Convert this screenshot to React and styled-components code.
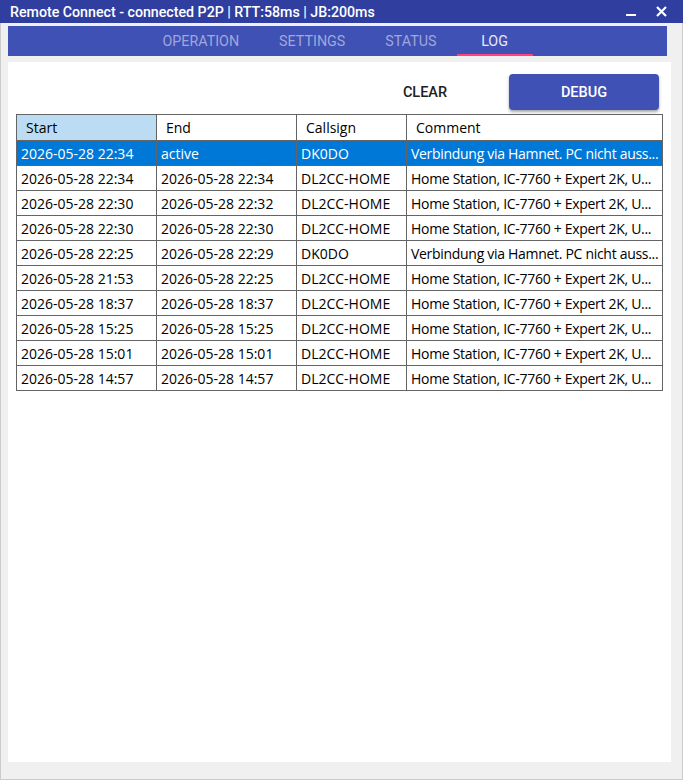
import styled, { createGlobalStyle } from "styled-components"

const GlobalStyle = createGlobalStyle`
  html, body {
    margin: 0;
    padding: 0;
    background: #f0f0f0;
  }
`

const TABS = ["Operation", "Settings", "Status", "Log"]

const COLUMNS = [
  { key: "start", title: "Start", width: 140 },
  { key: "end", title: "End", width: 140 },
  { key: "call", title: "Callsign", width: 110 },
  { key: "comment", title: "Comment", width: 256 },
]

const HOME = "Home Station, IC-7760 + Expert 2K, U..."
const HAMNET = "Verbindung via Hamnet. PC nicht auss..."

const ROWS = [
  { start: "2026-05-28 22:34", end: "active", call: "DK0DO", comment: HAMNET },
  { start: "2026-05-28 22:34", end: "2026-05-28 22:34", call: "DL2CC-HOME", comment: HOME },
  { start: "2026-05-28 22:30", end: "2026-05-28 22:32", call: "DL2CC-HOME", comment: HOME },
  { start: "2026-05-28 22:30", end: "2026-05-28 22:30", call: "DL2CC-HOME", comment: HOME },
  { start: "2026-05-28 22:25", end: "2026-05-28 22:29", call: "DK0DO", comment: HAMNET },
  { start: "2026-05-28 21:53", end: "2026-05-28 22:25", call: "DL2CC-HOME", comment: HOME },
  { start: "2026-05-28 18:37", end: "2026-05-28 18:37", call: "DL2CC-HOME", comment: HOME },
  { start: "2026-05-28 15:25", end: "2026-05-28 15:25", call: "DL2CC-HOME", comment: HOME },
  { start: "2026-05-28 15:01", end: "2026-05-28 15:01", call: "DL2CC-HOME", comment: HOME },
  { start: "2026-05-28 14:57", end: "2026-05-28 14:57", call: "DL2CC-HOME", comment: HOME },
]

const App = () => {
  return (
    <>
      <GlobalStyle />
      <Window>
        <TitleBar>
          <span className="title">Remote Connect - connected P2P | RTT:58ms | JB:200ms</span>
          <WinButton aria-label="minimize">
            <svg width="10" height="10" viewBox="0 0 10 10">
              <rect x="0" y="7" width="10" height="2" fill="#fff" />
            </svg>
          </WinButton>
          <WinButton aria-label="close">
            <svg width="11" height="11" viewBox="0 0 11 11">
              <path d="M1 1 L10 10 M10 1 L1 10" stroke="#fff" strokeWidth="2.2" />
            </svg>
          </WinButton>
        </TitleBar>

        <Body>
          <TabBar>
            {TABS.map((t) => (
              <Tab key={t} $active={t === "Log"}>{t}</Tab>
            ))}
          </TabBar>

          <Panel>
            <Toolbar>
              <TextButton>Clear</TextButton>
              <RaisedButton>Debug</RaisedButton>
            </Toolbar>

            <Grid>
              <colgroup>
                {COLUMNS.map((c) => (
                  <col key={c.key} width={c.width} />
                ))}
              </colgroup>
              <thead>
                <tr>
                  {COLUMNS.map((c) => (
                    <HeadCell key={c.key} $sorted={c.key === "start"}>
                      {c.title}
                    </HeadCell>
                  ))}
                </tr>
              </thead>
              <tbody>
                {ROWS.map((r, i) => (
                  <Row key={i} $selected={i === 0}>
                    {COLUMNS.map((c) => (
                      <Cell key={c.key} $tight={c.key === "comment"}>{r[c.key]}</Cell>
                    ))}
                  </Row>
                ))}
              </tbody>
            </Grid>
          </Panel>
        </Body>
      </Window>
    </>
  )
}

const Window = styled.div`
width: 683px;
height: 780px;
display: flex;
flex-direction: column;
background: #f0f0f0;
box-sizing: border-box;
`

const TitleBar = styled.div`
height: 23px;
flex: none;
display: flex;
align-items: center;
background: #303f9f;
color: #fff;
padding: 0 6px 0 10px;
font-family: Roboto, "Liberation Sans", sans-serif;
font-size: 14.2px;
font-weight: 500;
.title {
    flex: 1;
    white-space: nowrap;
}
`

const WinButton = styled.div`
width: 31px;
height: 23px;
display: flex;
align-items: center;
justify-content: center;
`

const Body = styled.div`
flex: 1;
display: flex;
flex-direction: column;
padding: 3px 11px 17px 7px;
border: 1px solid #cbcbcb;
border-top: none;
min-height: 0;
`

const TabBar = styled.div`
height: 30px;
flex: none;
margin-right: 4px;
background: #3f51b5;
display: flex;
justify-content: center;
`

const Tab = styled.div`
min-width: 76px;
padding: 0 20px;
box-sizing: border-box;
display: flex;
align-items: center;
justify-content: center;
padding-top: 1px;
text-transform: uppercase;
font-family: Roboto, "Liberation Sans", sans-serif;
font-size: 14.3px;
color: ${(p) => (p.$active ? "#e8eaf6" : "#9fa8da")};
border-bottom: 2px solid ${(p) => (p.$active ? "#ff4081" : "transparent")};
`

const Panel = styled.div`
flex: 1;
margin-top: 6px;
background: #fff;
padding: 12px 9px 0 8px;
`

const Toolbar = styled.div`
display: flex;
justify-content: flex-end;
gap: 9px;
padding-right: 3px;
margin-bottom: 4px;
`

const ButtonBase = styled.div`
width: 150px;
height: 36px;
display: flex;
align-items: center;
justify-content: center;
text-transform: uppercase;
font-family: Roboto, "Liberation Sans", sans-serif;
font-size: 14.5px;
font-weight: 500;
border-radius: 4px;
`

const TextButton = styled(ButtonBase)`
color: #212121;
`

const RaisedButton = styled(ButtonBase)`
background: #3f51b5;
color: #fff;
box-shadow: 0 2px 3px rgba(0, 0, 0, 0.35);
`

const Grid = styled.table`
width: 646px;
border-collapse: collapse;
table-layout: fixed;
font-family: "Open Sans", "Noto Sans", sans-serif;
font-size: 14px;
color: #000;
border: 1px solid #646464;
`

const HeadCell = styled.th`
height: 25px;
padding: 0 0 0 9px;
text-align: left;
font-weight: 400;
background: ${(p) => (p.$sorted ? "#bcdcf4" : "#fff")};
border: 1px solid #646464;
`

const Row = styled.tr`
background: ${(p) => (p.$selected ? "#0078d7" : "#fff")};
color: ${(p) => (p.$selected ? "#fff" : "#000")};
`

const Cell = styled.td`
height: 24px;
padding: 0 0 0 4px;
border: 1px solid #646464;
white-space: nowrap;
overflow: hidden;
letter-spacing: ${(p) => (p.$tight ? "-0.3px" : "normal")};
`

export default App
